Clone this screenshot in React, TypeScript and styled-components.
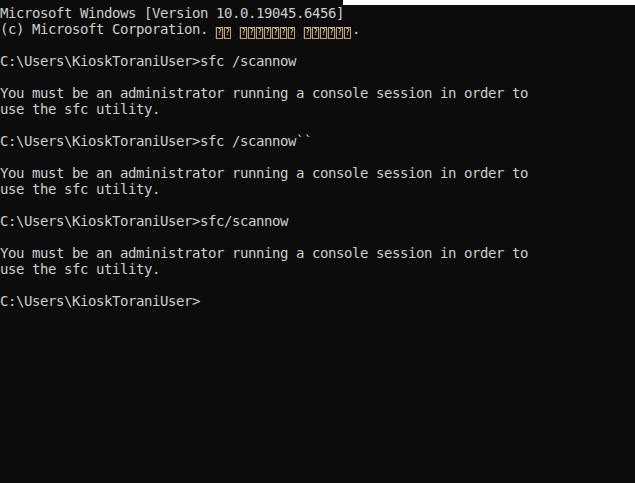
import React from "react";
import styled, { createGlobalStyle } from "styled-components";

const Global = createGlobalStyle`
  html, body { margin: 0; padding: 0; background: #0c0c0c; }
  #root { width: 635px; height: 483px; overflow: hidden; }
`;

const Screen = styled.div`
  width: 635px;
  height: 483px;
  background: #0c0c0c;
  display: flex;
  flex-direction: column;
  overflow: hidden;
`;

const TopStrip = styled.div`
  display: flex;
  height: 5px;
  flex: none;
`;

const StripDark = styled.div`
  width: 343px;
  background: #0c0c0c;
`;

const StripLight = styled.div`
  flex: 1;
  background: #ffffff;
`;

const Console = styled.div`
  display: flex;
  flex-direction: column;
  font-family: "DejaVu Sans Mono", "Liberation Mono", monospace;
  font-size: 14px;
  letter-spacing: -0.428px;
  line-height: 16px;
  color: #cccccc;
`;

const Line = styled.div`
  height: 16px;
  white-space: pre;
`;

const Tofu = styled.span`
  display: inline-flex;
  align-items: center;
  justify-content: center;
  box-sizing: border-box;
  width: 7px;
  height: 12px;
  margin-right: 1px;
  border: 1px solid #c9a063;
  box-shadow: -1px 0 0 rgba(60, 110, 200, 0.35);
  color: #e8e2d8;
  font-size: 8px;
  line-height: 8px;
  letter-spacing: 0;
  vertical-align: -1px;
  font-family: "DejaVu Sans", sans-serif;
`;

const TofuWord = ({ n }: { n: number }) => (
  <>
    {Array.from({ length: n }).map((_, i) => (
      <Tofu key={i}>?</Tofu>
    ))}
  </>
);

const prompt = "C:\\Users\\KioskToraniUser>";
const err1 = "You must be an administrator running a console session in order to";
const err2 = "use the sfc utility.";

export default function App() {
  return (
    <>
      <Global />
      <Screen>
        <TopStrip>
          <StripDark />
          <StripLight />
        </TopStrip>
        <Console>
          <Line>Microsoft Windows [Version 10.0.19045.6456]</Line>
          <Line>
            (c) Microsoft Corporation. <TofuWord n={2} /> <TofuWord n={7} />{" "}
            <TofuWord n={6} />.
          </Line>
          <Line> </Line>
          <Line>{prompt}sfc /scannow</Line>
          <Line> </Line>
          <Line>{err1}</Line>
          <Line>{err2}</Line>
          <Line> </Line>
          <Line>{prompt}sfc /scannow``</Line>
          <Line> </Line>
          <Line>{err1}</Line>
          <Line>{err2}</Line>
          <Line> </Line>
          <Line>{prompt}sfc/scannow</Line>
          <Line> </Line>
          <Line>{err1}</Line>
          <Line>{err2}</Line>
          <Line> </Line>
          <Line>{prompt}</Line>
        </Console>
      </Screen>
    </>
  );
}
